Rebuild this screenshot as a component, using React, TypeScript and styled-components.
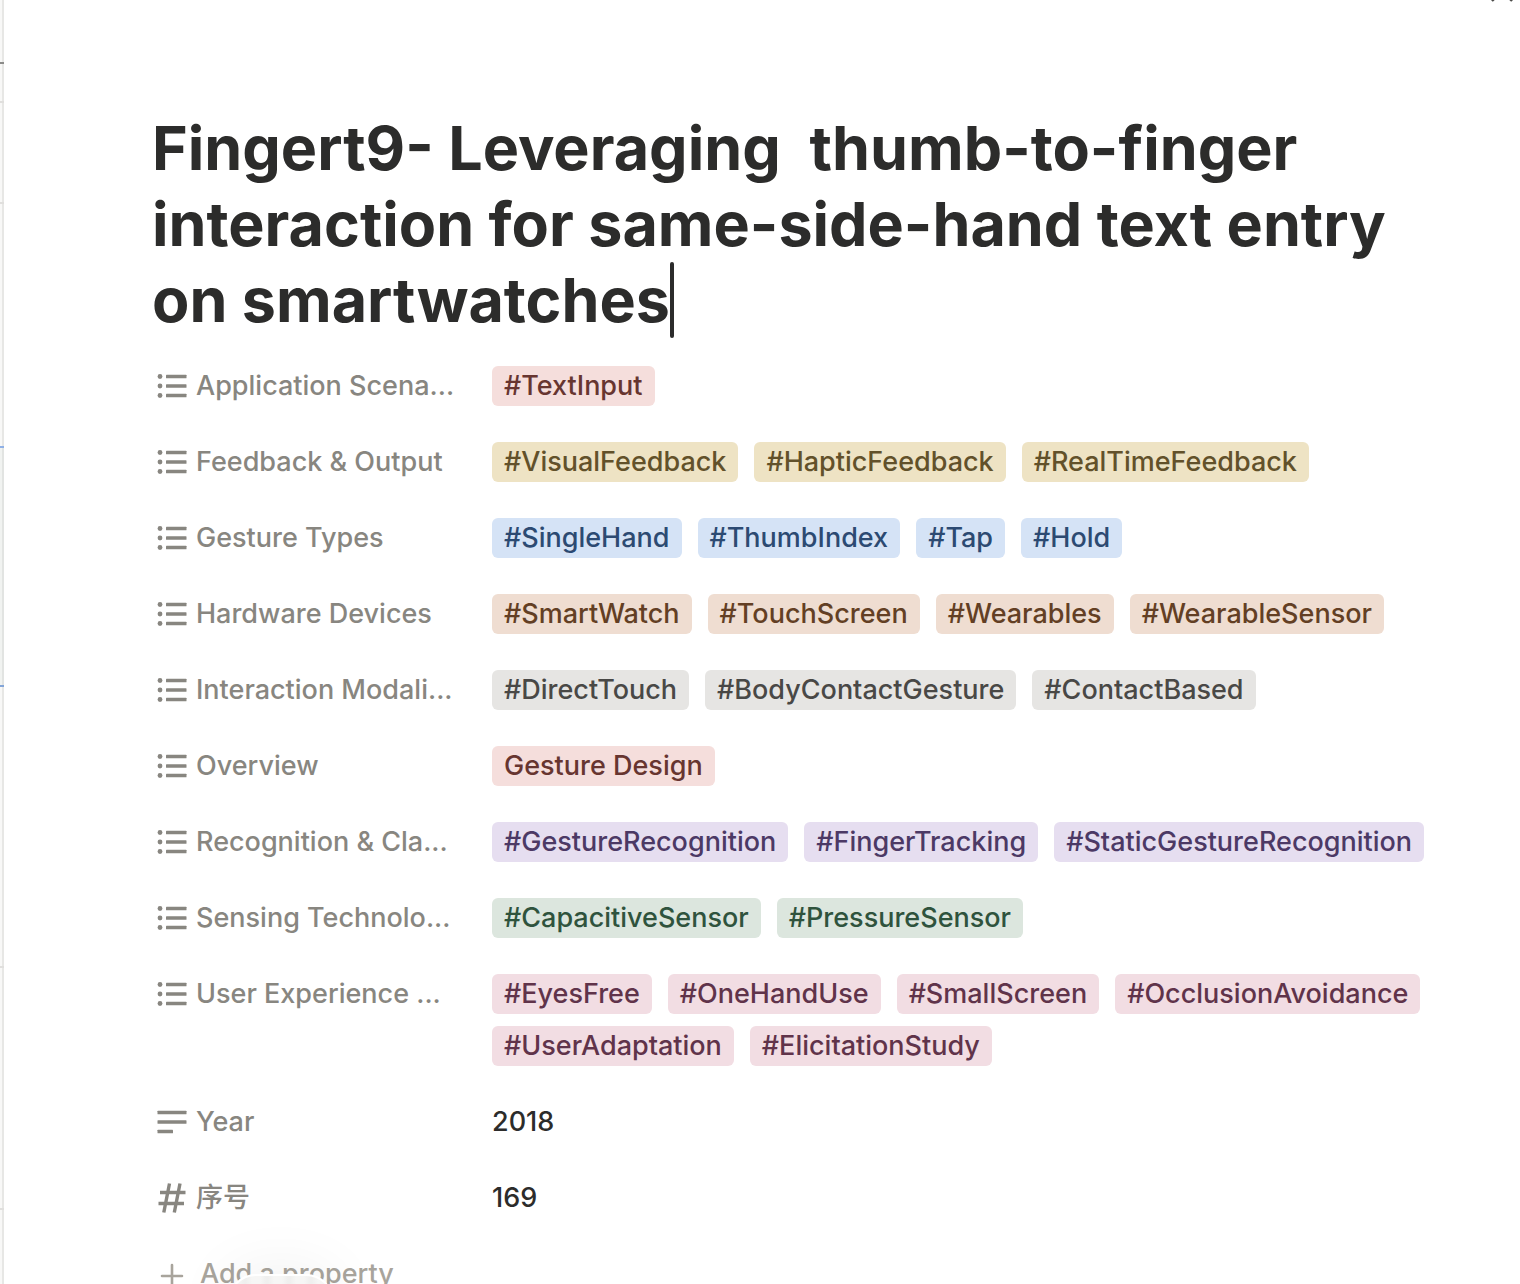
import React from "react";
import styled, { createGlobalStyle } from "styled-components";

const GlobalStyle = createGlobalStyle`
  *, *::before, *::after { box-sizing: border-box; }
  body {
    margin: 0;
    background: #ffffff;
    color: #2c2c2b;
    font-family: Inter, "Noto Sans CJK SC", sans-serif;
    font-size: 27px;
    font-weight: 450;
    line-height: 40px;
  }
`;

type Tone = "red" | "yellow" | "blue" | "brown" | "gray" | "purple" | "green" | "pink";
type IconKind = "list" | "text" | "number";

const tones: Record<Tone, { bg: string; fg: string }> = {
  red: { bg: "#f5dedc", fg: "#673530" },
  yellow: { bg: "#eee3c4", fg: "#62512a" },
  blue: { bg: "#d5e3f6", fg: "#2c4a72" },
  brown: { bg: "#efddd1", fg: "#633f24" },
  gray: { bg: "#e6e5e3", fg: "#494846" },
  purple: { bg: "#e6def0", fg: "#4c3965" },
  green: { bg: "#dce6de", fg: "#2f533d" },
  pink: { bg: "#f2dde3", fg: "#60334a" },
};

const Shell = styled.div`
  position: relative;
  display: flex;
  height: 100vh;
  overflow: hidden;
`;

const TableEdge = styled.aside`
  flex: none;
  display: flex;
  flex-direction: column;
  width: 4px;
  overflow: hidden;
  background: linear-gradient(90deg, #f8f8f7 2px, #e7e7e5 2px);
`;

const EdgeCell = styled.div<{ $height: number; $line: string; $fill?: string }>`
  flex: none;
  height: ${(p) => p.$height}px;
  border-bottom: 2px solid ${(p) => p.$line};
  background: ${(p) => p.$fill ?? "transparent"};
`;

const Page = styled.main`
  flex: 1;
  min-width: 0;
  padding: 110px 80px 0 148px;
`;

const Title = styled.h1`
  margin: 0 0 28px;
  font-size: 61px;
  line-height: 76px;
  font-weight: 700;
  white-space: pre-wrap;
`;

const Caret = styled.span`
  display: inline-block;
  width: 4px;
  height: 76px;
  border-radius: 2px;
  background: #2c2c2b;
  vertical-align: bottom;
`;

const Properties = styled.div`
  display: flex;
  flex-direction: column;
  gap: 36px;
`;

const Row = styled.div`
  display: grid;
  grid-template-columns: 300px minmax(0, 1fr);
  column-gap: 40px;
`;

const PlainButton = styled.button`
  display: flex;
  align-items: center;
  border: 0;
  background: none;
  font: inherit;
  text-align: left;
  cursor: pointer;
`;

const NameButton = styled(PlainButton)`
  gap: 8px;
  height: 40px;
  padding: 0 0 0 4px;
  min-width: 0;
  color: #888680;
`;

const Name = styled.span`
  white-space: nowrap;
`;

const AddButton = styled(PlainButton)`
  gap: 12px;
  height: 40px;
  padding: 0 0 0 4px;
  color: #a8a49c;
`;

const Values = styled.div`
  display: flex;
  flex-wrap: wrap;
  gap: 12px 16px;
`;

const Tag = styled.span<{ $tone: Tone }>`
  height: 40px;
  padding: 0 12px;
  border-radius: 6px;
  white-space: nowrap;
  background: ${(p) => tones[p.$tone].bg};
  color: ${(p) => tones[p.$tone].fg};
`;

const Icon = styled.svg`
  flex: none;
  display: block;
  width: 32px;
  height: 32px;
`;

const CloseButton = styled(PlainButton)`
  position: absolute;
  top: -19px;
  right: 6px;
  padding: 0;
  color: #4a4a48;
`;

const FloatingThumb = styled.div`
  position: absolute;
  left: 228px;
  bottom: -50px;
  width: 106px;
  height: 60px;
  border-radius: 28px;
  border: 2px solid #ffffff;
  background: repeating-linear-gradient(90deg, #f6f6f5 0 8px, #efefee 14px 16px, #f6f6f5 22px);
  box-shadow: 0 0 64px rgba(0, 0, 0, 0.07);
`;

function PropertyIcon({ kind }: { kind: IconKind }) {
  if (kind === "list") {
    return (
      <Icon viewBox="0 0 32 32" aria-hidden="true">
        <g fill="currentColor">
          <circle cx="4" cy="6.5" r="2.4" />
          <circle cx="4" cy="16" r="2.4" />
          <circle cx="4" cy="25.5" r="2.4" />
          <rect x="10" y="4.7" width="20.5" height="3.6" rx="0.6" />
          <rect x="10" y="14.2" width="20.5" height="3.6" rx="0.6" />
          <rect x="10" y="23.7" width="20.5" height="3.6" rx="0.6" />
        </g>
      </Icon>
    );
  }
  if (kind === "text") {
    return (
      <Icon viewBox="0 0 32 32" aria-hidden="true">
        <g fill="currentColor">
          <rect x="1.5" y="4.7" width="29" height="3.6" rx="0.6" />
          <rect x="1.5" y="14.2" width="29" height="3.6" rx="0.6" />
          <rect x="1.5" y="23.7" width="15.5" height="3.6" rx="0.6" />
        </g>
      </Icon>
    );
  }
  return (
    <Icon viewBox="0 0 32 32" aria-hidden="true">
      <path
        d="M13.5 1.5 L7.8 30.5 M24 1.5 L18.3 30.5 M4 10.5 H29.5 M2.5 21.5 H28"
        fill="none"
        stroke="currentColor"
        strokeWidth="3.4"
      />
    </Icon>
  );
}

interface Property {
  name: string;
  icon: IconKind;
  tone?: Tone;
  tags?: string[];
  text?: string;
}

const properties: Property[] = [
  { name: "Application Scena...", icon: "list", tone: "red", tags: ["#TextInput"] },
  {
    name: "Feedback & Output",
    icon: "list",
    tone: "yellow",
    tags: ["#VisualFeedback", "#HapticFeedback", "#RealTimeFeedback"],
  },
  { name: "Gesture Types", icon: "list", tone: "blue", tags: ["#SingleHand", "#ThumbIndex", "#Tap", "#Hold"] },
  {
    name: "Hardware Devices",
    icon: "list",
    tone: "brown",
    tags: ["#SmartWatch", "#TouchScreen", "#Wearables", "#WearableSensor"],
  },
  {
    name: "Interaction Modali...",
    icon: "list",
    tone: "gray",
    tags: ["#DirectTouch", "#BodyContactGesture", "#ContactBased"],
  },
  { name: "Overview", icon: "list", tone: "red", tags: ["Gesture Design"] },
  {
    name: "Recognition & Cla...",
    icon: "list",
    tone: "purple",
    tags: ["#GestureRecognition", "#FingerTracking", "#StaticGestureRecognition"],
  },
  { name: "Sensing Technolo...", icon: "list", tone: "green", tags: ["#CapacitiveSensor", "#PressureSensor"] },
  {
    name: "User Experience ...",
    icon: "list",
    tone: "pink",
    tags: ["#EyesFree", "#OneHandUse", "#SmallScreen", "#OcclusionAvoidance", "#UserAdaptation", "#ElicitationStudy"],
  },
  { name: "Year", icon: "text", text: "2018" },
  { name: "序号", icon: "number", text: "169" },
];

function PropertyRow({ property }: { property: Property }) {
  return (
    <Row>
      <NameButton type="button">
        <PropertyIcon kind={property.icon} />
        <Name>{property.name}</Name>
      </NameButton>
      <Values>
        {property.tags?.map((tag) => (
          <Tag key={tag} $tone={property.tone ?? "gray"}>
            {tag}
          </Tag>
        ))}
        {property.text && <span>{property.text}</span>}
      </Values>
    </Row>
  );
}

export default function App() {
  return (
    <>
      <GlobalStyle />
      <Shell>
        <TableEdge aria-hidden="true">
          <EdgeCell $height={64} $line="#8b8b89" />
          <EdgeCell $height={39} $line="#e0dfdd" />
          <EdgeCell $height={101} $line="#e0dfdd" />
          <EdgeCell $height={244} $line="#8fb0e6" />
          <EdgeCell $height={239} $line="#83a5d8" $fill="rgba(200, 215, 210, 0.15)" />
          <EdgeCell $height={281} $line="#e0dfdd" />
          <EdgeCell $height={242} $line="#e0dfdd" />
        </TableEdge>
        <Page>
          <Title>
            {"Fingert9- Leveraging  thumb-to-finger interaction for same-side-hand text entry on smartwatches"}
            <Caret />
          </Title>
          <Properties>
            {properties.map((property) => (
              <PropertyRow key={property.name} property={property} />
            ))}
            <AddButton type="button">
              <Icon viewBox="0 0 32 32" aria-hidden="true">
                <path d="M16 7 V29 M6 18 H26" fill="none" stroke="currentColor" strokeWidth="2.6" strokeLinecap="round" />
              </Icon>
              <span>Add a property</span>
            </AddButton>
          </Properties>
        </Page>
        <CloseButton type="button" aria-label="Close">
          <svg width="24" height="24" viewBox="0 0 24 24" aria-hidden="true">
            <path d="M2 0 L22 20 M22 0 L2 20" fill="none" stroke="currentColor" strokeWidth="2.4" />
          </svg>
        </CloseButton>
        <FloatingThumb aria-hidden="true" />
      </Shell>
    </>
  );
}
